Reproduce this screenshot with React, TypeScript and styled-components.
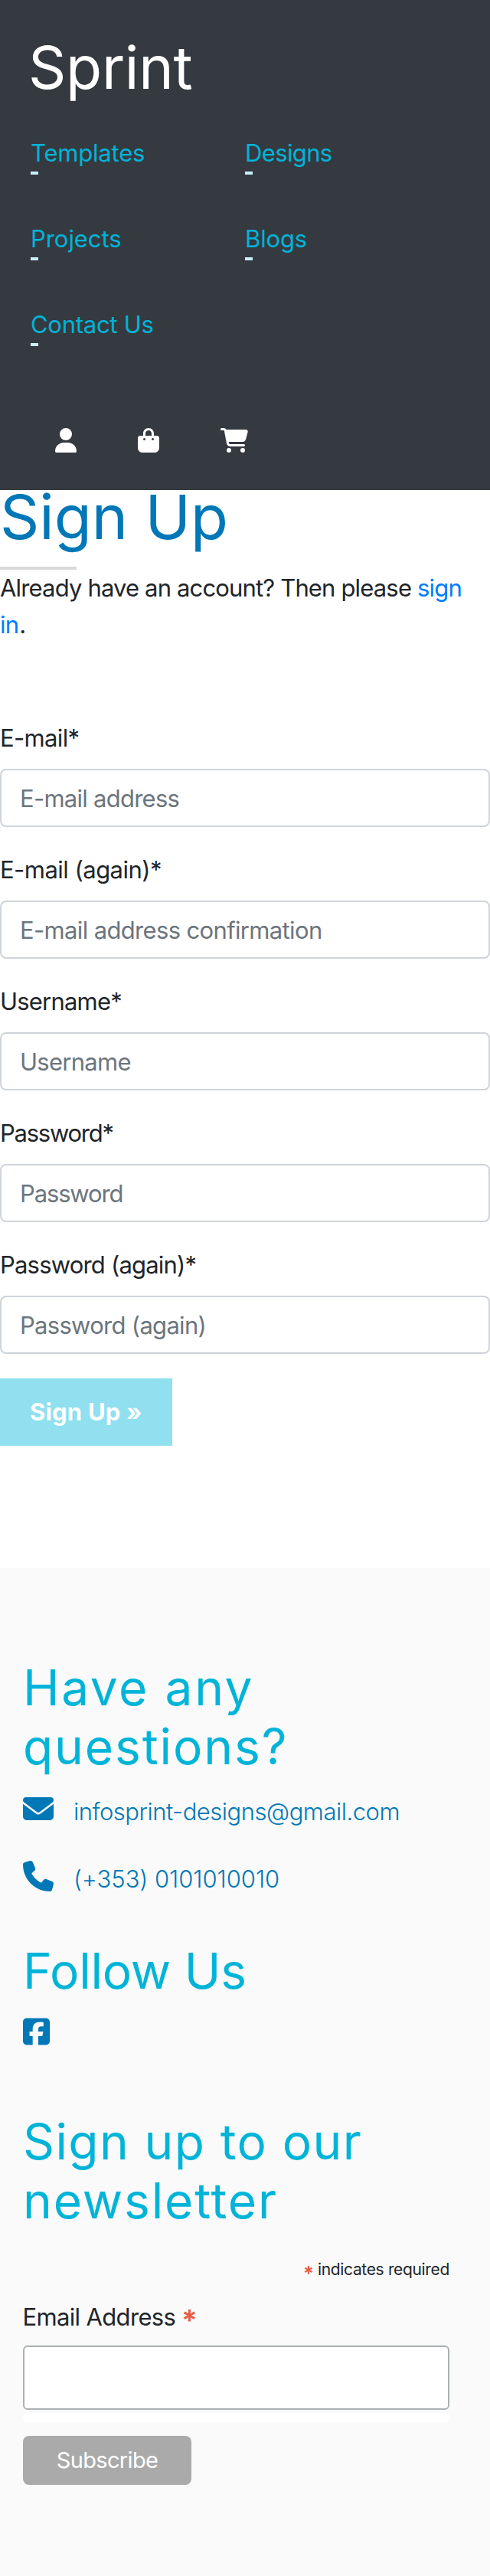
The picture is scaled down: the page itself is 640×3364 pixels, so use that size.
import React from "react";
import styled, { createGlobalStyle } from "styled-components";
import {
  FaBagShopping,
  FaCartShopping,
  FaEnvelope,
  FaPhone,
  FaSquareFacebook,
  FaUser,
} from "react-icons/fa6";

const GlobalStyle = createGlobalStyle`
  *, *::before, *::after { box-sizing: border-box; }
  body {
    margin: 0;
    background: #fff;
    color: #212529;
    font: 400 31px/48px Inter, "Liberation Sans", sans-serif;
  }
  a { text-decoration: none; }
`;

interface Tracked {
  $track?: number;
}

const Header = styled.header`
  height: 640px;
  padding: 40px 40px 0;
  background: #343a40;
`;

const Brand = styled.a`
  display: block;
  width: max-content;
  margin-left: -3px;
  color: #fff;
  font-size: 77px;
  line-height: 96px;
  letter-spacing: -0.3px;
`;

const Nav = styled.nav`
  display: grid;
  grid-template-columns: 280px 280px;
  row-gap: 60px;
  margin-top: 40px;
`;

const NavLink = styled.a<Tracked>`
  color: #00b4d8;
  letter-spacing: ${({ $track = 0 }) => $track}px;

  &::after {
    content: "";
    display: block;
    width: 10px;
    height: 4px;
    background: #caf0f8;
  }
`;

const IconBar = styled.div`
  display: flex;
  gap: 80px;
  margin: 107px 0 0 32px;
  color: #fff;
`;

const IconLink = styled.a<{ $width: number }>`
  width: ${({ $width }) => $width}px;
  height: 32px;

  svg {
    display: block;
    width: 100%;
    height: 100%;
  }
`;

const Title = styled.h1`
  margin: 0;
  color: #0077b6;
  font-size: 80px;
  font-weight: 400;
  line-height: 70px;
`;

const TitleRule = styled.hr`
  width: 100px;
  height: 4px;
  margin: 30px 0 0;
  border: 0;
  background: #d9d9d9;
`;

const Intro = styled.p`
  width: 620px;
  margin: 0;
  letter-spacing: -0.84px;

  a {
    margin-right: 1px;
    color: #007bff;
  }
`;

const SignUpForm = styled.form`
  display: flex;
  flex-direction: column;
  align-items: flex-start;
  gap: 32px;
  margin: 100px 0 160px;
`;

const Field = styled.div`
  display: flex;
  flex-direction: column;
  gap: 16px;
  width: 100%;
`;

const Label = styled.label<Tracked>`
  letter-spacing: ${({ $track = 0 }) => $track}px;
`;

const TextInput = styled.input<Tracked>`
  width: 100%;
  height: 76px;
  padding: 0 24px;
  border: 2px solid #ced4da;
  border-radius: 8px;
  background: #fff;
  color: #495057;
  font: inherit;
  letter-spacing: ${({ $track = 0 }) => $track}px;

  &::placeholder {
    color: #6c757d;
    opacity: 1;
  }
`;

const SubmitButton = styled.button`
  width: 225px;
  height: 88px;
  padding: 0 0 0 39px;
  border: 0;
  background: #90e0ef;
  color: #fff;
  font: inherit;
  font-weight: 700;
  letter-spacing: 0.19px;
  text-align: left;
`;

const Footer = styled.footer`
  height: 1316px;
  padding: 118px 53px 0 30px;
  background: #fafafa;
`;

const FooterHeading = styled.h2<{ $top?: number }>`
  margin: ${({ $top = 0 }) => $top}px 0 0;
  color: #00b4d8;
  font-size: 64px;
  font-weight: 400;
  line-height: 76.8px;
`;

const HeadingLine = styled.span<Tracked>`
  display: block;
  letter-spacing: ${({ $track = 0 }) => $track}px;
`;

const ContactList = styled.div`
  display: flex;
  flex-direction: column;
  gap: 40px;
  margin-top: 22px;
`;

const ContactLink = styled.a<Tracked>`
  display: flex;
  gap: 26px;
  height: 48px;
  color: #0077b6;
  font-weight: 300;
  letter-spacing: ${({ $track = 0 }) => $track}px;

  svg {
    width: 40px;
    height: 40px;
  }
`;

const SocialLink = styled.a`
  display: block;
  width: 35px;
  height: 40px;
  margin-top: 21px;
  color: #0077b6;

  svg {
    display: block;
    width: 35px;
    height: 40px;
  }
`;

const RequiredNote = styled.p`
  display: flex;
  justify-content: flex-end;
  gap: 5px;
  margin: 35px 0 22px;
  font-size: 21px;
  line-height: 32px;
  letter-spacing: -0.34px;
`;

const Asterisk = styled.span<{ $size: number; $drop: number }>`
  align-self: center;
  padding-top: ${({ $drop }) => $drop}px;
  color: #e85c41;
  font-size: ${({ $size }) => $size}px;
  font-weight: 600;
  line-height: 0;
  letter-spacing: 0;
`;

const EmailLabel = styled.label`
  display: flex;
  gap: 8px;
  margin-left: -0.5px;
  letter-spacing: -0.65px;
`;

const NewsletterInput = styled.input`
  display: block;
  width: 557px;
  height: 84px;
  margin-top: 13px;
  border: 2px solid #abb0b2;
  border-radius: 6px;
  background: #fff;
  font: inherit;
`;

const ResponseStrip = styled.div`
  width: 557px;
  height: 12px;
  margin: 4px 0 18px;
  border-radius: 6px;
  background: #fff;
`;

const SubscribeButton = styled.button`
  width: 220px;
  height: 64px;
  padding: 0;
  border: 0;
  border-radius: 8px;
  background: #aaa;
  color: #fff;
  font: inherit;
  font-size: 29px;
  letter-spacing: -0.65px;
`;

const links = [
  { text: "Templates", track: -0.2 },
  { text: "Designs", track: -0.64 },
  { text: "Projects", track: -0.05 },
  { text: "Blogs", track: -0.15 },
  { text: "Contact Us", track: -0.27 },
];

const fields = [
  { id: "email", type: "email", label: "E-mail*", track: -0.66, hint: "E-mail address", hintTrack: -0.74 },
  { id: "email2", type: "email", label: "E-mail (again)*", track: -0.53, hint: "E-mail address confirmation", hintTrack: -0.65 },
  { id: "username", type: "text", label: "Username*", track: -0.8, hint: "Username", hintTrack: -0.72 },
  { id: "password1", type: "password", label: "Password*", track: -1.25, hint: "Password", hintTrack: -1.14 },
  { id: "password2", type: "password", label: "Password (again)*", track: -0.81, hint: "Password (again)", hintTrack: -0.71 },
];

export default function App() {
  return (
    <>
      <GlobalStyle />
      <Header>
        <Brand>Sprint</Brand>
        <Nav>
          {links.map((link) => (
            <NavLink key={link.text} $track={link.track}>
              {link.text}
            </NavLink>
          ))}
        </Nav>
        <IconBar>
          <IconLink $width={28}>
            <FaUser />
          </IconLink>
          <IconLink $width={28}>
            <FaBagShopping />
          </IconLink>
          <IconLink $width={36}>
            <FaCartShopping />
          </IconLink>
        </IconBar>
      </Header>

      <main>
        <Title>Sign Up</Title>
        <TitleRule />
        <Intro>
          Already have an account? Then please <a>sign in</a>.
        </Intro>
        <SignUpForm>
          {fields.map((field) => (
            <Field key={field.id}>
              <Label htmlFor={field.id} $track={field.track}>
                {field.label}
              </Label>
              <TextInput id={field.id} type={field.type} placeholder={field.hint} $track={field.hintTrack} />
            </Field>
          ))}
          <SubmitButton type="button">Sign Up »</SubmitButton>
        </SignUpForm>
      </main>

      <Footer>
        <FooterHeading>
          <HeadingLine $track={2.6}>Have any</HeadingLine>
          <HeadingLine $track={1.9}>questions?</HeadingLine>
        </FooterHeading>
        <ContactList>
          <ContactLink $track={-0.49}>
            <FaEnvelope />
            infosprint-designs@gmail.com
          </ContactLink>
          <ContactLink $track={-0.04}>
            <FaPhone />
            (+353) 0101010010
          </ContactLink>
        </ContactList>
        <FooterHeading $top={58}>
          <HeadingLine $track={-0.2}>Follow Us</HeadingLine>
        </FooterHeading>
        <SocialLink>
          <FaSquareFacebook />
        </SocialLink>
        <FooterHeading $top={86}>
          <HeadingLine $track={1.4}>Sign up to our</HeadingLine>
          <HeadingLine $track={1.9}>newsletter</HeadingLine>
        </FooterHeading>
        <RequiredNote>
          <Asterisk $size={26} $drop={11}>*</Asterisk>
          indicates required
        </RequiredNote>
        <EmailLabel htmlFor="newsletter">
          Email Address
          <Asterisk $size={38} $drop={8}>*</Asterisk>
        </EmailLabel>
        <NewsletterInput id="newsletter" type="email" />
        <ResponseStrip />
        <SubscribeButton type="button">Subscribe</SubscribeButton>
      </Footer>
    </>
  );
}
